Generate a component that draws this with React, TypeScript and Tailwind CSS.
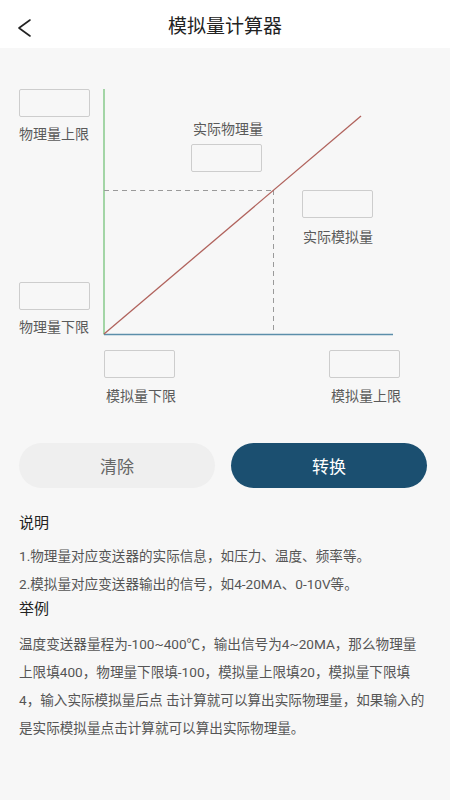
import React from "react";

const font = { fontFamily: 'Roboto, "Noto Sans CJK SC", "Noto Sans", sans-serif' };
const cjk = { fontFamily: '"Noto Sans CJK SC", "Noto Sans", sans-serif' };

function Box({ className }: { className: string }) {
  return (
    <input
      type="text"
      className={`absolute h-[28px] w-[71px] rounded-[2px] border border-[#cdcdcd] bg-[#f7f7f7] outline-none ${className}`}
    />
  );
}

function Label({ className, children }: { className: string; children: React.ReactNode }) {
  return (
    <div style={cjk} className={`absolute text-[14px] leading-[16px] text-[#5a5a5a] whitespace-nowrap ${className}`}>
      {children}
    </div>
  );
}

export default function App() {
  return (
    <div style={font} className="w-[450px] min-h-[800px] bg-[#f7f7f7]">
      {/* Header */}
      <div className="relative flex h-[48px] items-center justify-center bg-white">
        <svg className="absolute left-[16px] top-[17px]" width="18" height="22" viewBox="0 0 18 22">
          <path d="M14 3 L3 11 L14 19" fill="none" stroke="#222" strokeWidth="1.6" strokeLinecap="round" strokeLinejoin="round" />
        </svg>
        <div style={cjk} className="text-[19px] text-[#222] leading-none">模拟量计算器</div>
      </div>

      {/* Chart diagram */}
      <div className="relative h-[395px]">
        <svg className="absolute inset-0" width="450" height="395" viewBox="0 0 450 395">
          <line x1="104" y1="41" x2="104" y2="286.5" stroke="#a3d5a6" strokeWidth="2" />
          <line x1="104" y1="286.5" x2="393" y2="286.5" stroke="#5b8eaa" strokeWidth="1.5" />
          <line x1="104" y1="142.5" x2="273" y2="142.5" stroke="#9a9a9a" strokeWidth="1" strokeDasharray="5 4" />
          <line x1="273.5" y1="142" x2="273.5" y2="286" stroke="#9a9a9a" strokeWidth="1" strokeDasharray="5 4" />
          <line x1="104" y1="286" x2="361" y2="68" stroke="#b0625c" strokeWidth="1.3" />
        </svg>

        <Box className="left-[19px] top-[41px]" />
        <Label className="left-[19px] top-[77px]">物理量上限</Label>

        <Label className="left-[193px] top-[72px]">实际物理量</Label>
        <Box className="left-[191px] top-[96px]" />

        <Box className="left-[302px] top-[142px]" />
        <Label className="left-[303px] top-[180px]">实际模拟量</Label>

        <Box className="left-[19px] top-[234px]" />
        <Label className="left-[19px] top-[270px]">物理量下限</Label>

        <Box className="left-[104px] top-[302px]" />
        <Label className="left-[106px] top-[339px]">模拟量下限</Label>

        <Box className="left-[329px] top-[302px]" />
        <Label className="left-[331px] top-[339px]">模拟量上限</Label>
      </div>

      {/* Buttons */}
      <div style={cjk} className="flex gap-[16px] pl-[19px] pr-[23px]">
        <button className="flex h-[45px] flex-1 items-center justify-center rounded-full bg-[#efefef] text-[17px] text-[#666]">
          清除
        </button>
        <button className="flex h-[45px] flex-1 items-center justify-center rounded-full bg-[#1b4f70] text-[17px] text-white">
          转换
        </button>
      </div>

      {/* Description */}
      <div className="px-[19px] pt-[24px] text-[#555]">
        <div className="text-[15px] leading-[22px] text-[#222]">说明</div>
        <div className="mt-[8px] text-[13.6px] leading-[28px] whitespace-nowrap">1.物理量对应变送器的实际信息，如压力、温度、频率等。</div>
        <div className="text-[13.6px] leading-[28px] whitespace-nowrap">2.模拟量对应变送器输出的信号，如4-20MA、0-10V等。</div>
        <div className="text-[15px] leading-[22px] text-[#222]">举例</div>
        <div className="mt-[10px] text-[13.6px] leading-[28px] whitespace-nowrap">
          <div>温度变送器量程为-100~400℃，输出信号为4~20MA，那么物理量</div>
          <div>上限填400，物理量下限填-100，模拟量上限填20，模拟量下限填</div>
          <div>4，输入实际模拟量后点 击计算就可以算出实际物理量，如果输入的</div>
          <div>是实际模拟量点击计算就可以算出实际物理量。</div>
        </div>
      </div>
    </div>
  );
}
